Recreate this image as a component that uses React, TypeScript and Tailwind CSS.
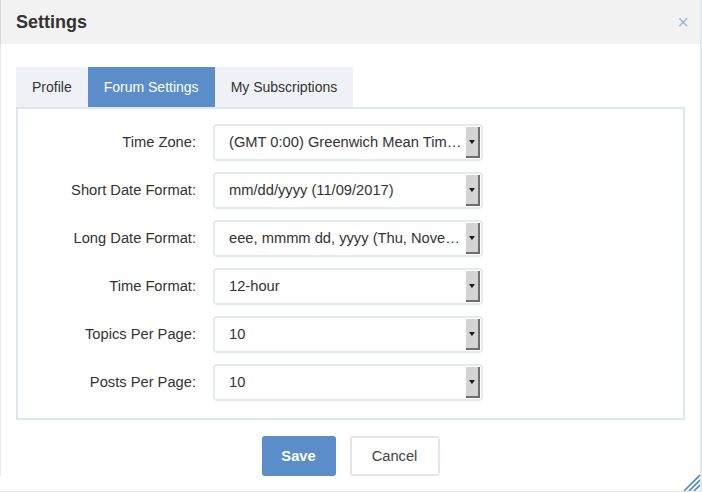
import { useState } from "react";

const rows = [
  { label: "Time Zone:", value: "(GMT 0:00) Greenwich Mean Time : Dublin, Edinburgh, Lisbon, London" },
  { label: "Short Date Format:", value: "mm/dd/yyyy (11/09/2017)" },
  { label: "Long Date Format:", value: "eee, mmmm dd, yyyy (Thu, November 09, 2017)" },
  { label: "Time Format:", value: "12-hour" },
  { label: "Topics Per Page:", value: "10" },
  { label: "Posts Per Page:", value: "10" },
];

const tabs = ["Profile", "Forum Settings", "My Subscriptions"];

function FakeSelect({ value }: { value: string }) {
  return (
    <div className="flex h-[37px] w-[270px] items-center rounded-[4px] border-2 border-[#e6ebf1] bg-white pl-[14px] pr-[1px]">
      <span className="flex-1 truncate text-[14.7px] text-[#333]">{value}</span>
      <span className="ml-[4px] flex h-[31px] w-[14px] shrink-0 items-center justify-center border-r-2 border-b-2 border-[#6e6e6e] bg-[#d4d4d4]">
        <svg width="6" height="4" viewBox="0 0 6 4">
          <path d="M0 0h6L3 4z" fill="#111" />
        </svg>
      </span>
    </div>
  );
}

export default function App() {
  const [active, setActive] = useState(1);

  return (
    <div
      className="relative h-[492px] w-[702px] overflow-hidden border-r-2 border-b border-[#e4e8ec] bg-white"
      style={{ fontFamily: '"Liberation Sans", Arial, sans-serif' }}
    >
      <div className="flex h-[44px] items-center justify-between border-l border-[#d8d8d8] bg-[#f2f2f2] pl-[15px] pr-[11px]">
        <h1 className="text-[18px] font-bold text-[#333]">Settings</h1>
        <span className="text-[20px] leading-none text-[#a3b9d4]">×</span>
      </div>

      <div className="border-l border-[#e8e8e8] px-[15px] pt-[23px]">
        <div className="flex">
          {tabs.map((t, i) => (
            <button
              key={t}
              onClick={() => setActive(i)}
              className={
                i === active
                  ? "h-[40px] bg-[#5a8dc9] px-[16px] text-[14px] text-white"
                  : "h-[40px] bg-[#eef2f6] px-[16px] text-[14px] text-[#333]"
              }
            >
              {t}
            </button>
          ))}
        </div>

        <div className="flex h-[313px] flex-col gap-[11px] border-2 border-[#dfe6ee] pt-[15px]">
          {rows.map((r) => (
            <div key={r.label} className="flex items-center">
              <label className="w-[178px] text-right text-[14.7px] text-[#333]">{r.label}</label>
              <div className="ml-[17px]">
                <FakeSelect value={r.value} />
              </div>
            </div>
          ))}
        </div>

        <div className="flex justify-center gap-[14px] pt-[16px]">
          <button className="h-[40px] w-[74px] rounded-[3px] bg-[#5a8dc9] text-[14.7px] font-bold text-white">
            Save
          </button>
          <button className="h-[40px] w-[90px] rounded-[3px] border-2 border-[#e2e7ed] bg-white text-[14.7px] text-[#444]">
            Cancel
          </button>
        </div>
      </div>

      <svg className="absolute bottom-0 right-0" width="20" height="20" viewBox="0 0 20 20">
        <path d="M4 20L20 4M9 20L20 9M14 20L20 14" stroke="#4a86c8" strokeWidth="1.6" />
      </svg>
    </div>
  );
}
